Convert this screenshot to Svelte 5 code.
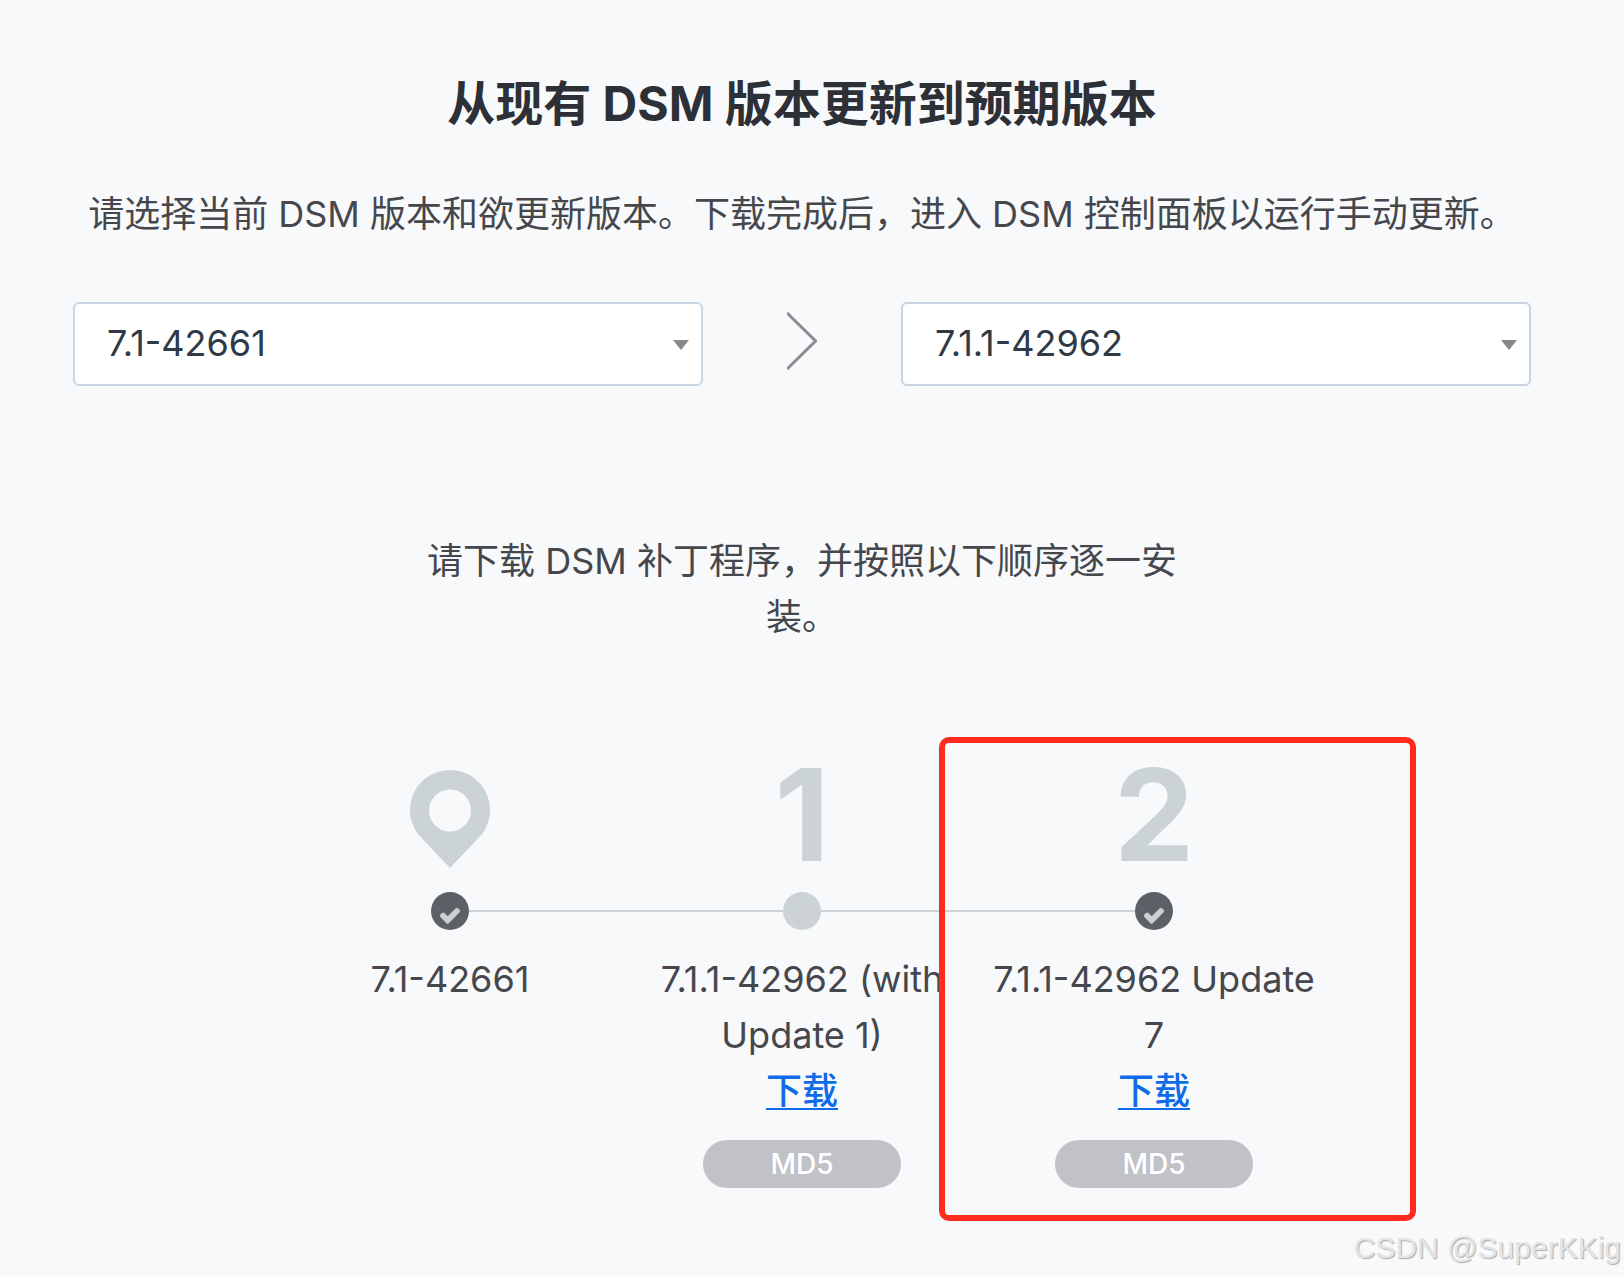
<script lang="ts">
  interface Step {
    version: string;
    installed: boolean;
    download: boolean;
    highlighted: boolean;
  }

  let currentVersion = $state('7.1-42661');
  let targetVersion = $state('7.1.1-42962');

  const steps: Step[] = [
    { version: '7.1-42661', installed: true, download: false, highlighted: false },
    { version: '7.1.1-42962 (with Update 1)', installed: false, download: true, highlighted: false },
    { version: '7.1.1-42962 Update 7', installed: true, download: true, highlighted: true },
  ];
</script>

<main class="update-page">
  <h1>从现有 DSM 版本更新到预期版本</h1>
  <p class="intro">请选择当前 DSM 版本和欲更新版本。下载完成后，进入 DSM 控制面板以运行手动更新。</p>

  <div class="versions">
    <div class="select-box">
      <select bind:value={currentVersion} aria-label="当前版本">
        <option>7.1-42661</option>
      </select>
    </div>
    <svg class="chevron" width="30" height="58" viewBox="0 0 30 58" aria-hidden="true">
      <path d="M0 1l28.5 28L0 57" fill="none" stroke="#8c8d91" stroke-width="3" />
    </svg>
    <div class="select-box">
      <select bind:value={targetVersion} aria-label="欲更新版本">
        <option>7.1.1-42962</option>
      </select>
    </div>
  </div>

  <p class="hint">请下载 DSM 补丁程序，并按照以下顺序逐一安装。</p>

  <ol class="steps">
    {#each steps as step, i}
      <li class="step" class:highlighted={step.highlighted}>
        <div class="marker">
          {#if i === 0}
            <svg width="80" height="106" viewBox="0 0 80 106" aria-hidden="true">
              <path
                fill="#cbd3d6"
                fill-rule="evenodd"
                d="M40 8a40 40 0 0 1 28.3 68.3L40 106 11.7 76.3A40 40 0 0 1 40 8zm0 19.5a21 21 0 1 0 0 42 21 21 0 0 0 0-42z"
              />
            </svg>
          {:else}
            {i}
          {/if}
        </div>
        <div class="track">
          <span class="dot" class:installed={step.installed}>
            <svg width="38" height="38" viewBox="0 0 38 38" aria-hidden="true">
              <path
                d="M9.4 22.6l2-1.9q1-.7 2 .2l3.3 3.3 8.1-8q1-.8 2 0l2 1.9q.8 1 0 2L17.6 31.4q-1 .9-2 0L9.4 25q-.9-1.2 0-2.4z"
                fill="#cfcfcf"
              />
            </svg>
          </span>
        </div>
        <div class="version">{step.version}</div>
        {#if step.download}
          <a href="#download-{i}">下载</a>
          <button type="button">MD5</button>
        {/if}
      </li>
    {/each}
  </ol>

  <div class="watermark">CSDN @SuperKKig</div>
</main>

<style>
  :global(body) {
    margin: 0;
    background: #f8f9fb;
  }

  .update-page {
    position: relative;
    box-sizing: border-box;
    padding: 72px 93px 88px 73px;
    color: #45474c;
    background: #f8f9fb;
    font-family: Inter, 'Noto Sans CJK SC', sans-serif;
    font-size: 36px;
    line-height: 56px;
    text-align: center;
  }

  h1 {
    margin: 0 0 50px;
    color: #2d3036;
    font-size: 48px;
    font-weight: 700;
    line-height: 64px;
  }

  p {
    margin: 0;
  }

  .versions {
    display: grid;
    grid-template-columns: 1fr 198px 1fr;
    align-items: center;
    justify-items: center;
    margin-top: 60px;
  }

  .chevron {
    display: block;
    margin-bottom: 6px;
  }

  .select-box {
    position: relative;
    width: 100%;
  }

  .select-box::after {
    content: '';
    position: absolute;
    top: 38px;
    right: 14px;
    border: 8px solid transparent;
    border-top: 10px solid #888;
    border-bottom: 0;
    pointer-events: none;
  }

  select {
    display: block;
    box-sizing: border-box;
    width: 100%;
    height: 84px;
    padding: 0 48px 2px 32px;
    border: 2px solid #c8d5e2;
    border-radius: 6px;
    appearance: none;
    background: #fff;
    color: #2f3a46;
    font: inherit;
  }

  .hint {
    max-width: 760px;
    margin: 147px auto 0;
  }

  .steps {
    display: grid;
    grid-template-columns: repeat(3, 1fr);
    max-width: 1056px;
    margin: 106px auto 0;
    padding: 0;
    list-style: none;
  }

  .step {
    position: relative;
    display: flex;
    flex-direction: column;
    align-items: center;
  }

  .marker {
    display: flex;
    align-items: center;
    height: 128px;
    color: #cbd3d6;
    font-size: 128px;
    font-weight: 700;
    line-height: 128px;
  }

  .track {
    display: flex;
    align-items: center;
    width: 100%;
    margin: 13px 0 21px;
  }

  .track::before,
  .track::after {
    content: '';
    flex: 1;
    height: 2px;
    background: #cbd3d6;
  }

  .step:first-child .track::before,
  .step:last-child .track::after {
    background: none;
  }

  .dot {
    width: 38px;
    height: 38px;
    border-radius: 50%;
    background: #cbd3d6;
  }

  .dot.installed {
    background: #5c6168;
  }

  .dot svg {
    display: block;
  }

  a {
    color: #0f6be8;
    font-weight: 500;
    text-decoration: underline;
    text-decoration-thickness: 2px;
    text-underline-offset: 4px;
  }

  button {
    width: 198px;
    height: 48px;
    margin-top: 21px;
    padding: 0;
    border: 0;
    border-radius: 24px;
    background: #c1c2c8;
    color: #fff;
    font: inherit;
    font-size: 28px;
    font-weight: 500;
    line-height: 48px;
  }

  .highlighted::after {
    content: '';
    position: absolute;
    top: -14px;
    right: -86px;
    bottom: -33px;
    left: -39px;
    border: 6px solid #ff2b1f;
    border-radius: 10px;
    pointer-events: none;
  }

  .watermark {
    position: absolute;
    right: 3px;
    bottom: 10px;
    color: #e3e4e6;
    font-family: 'Liberation Sans', sans-serif;
    font-size: 30px;
    line-height: 36px;
    text-shadow: 1px 1px 1px #aaa;
  }
</style>
